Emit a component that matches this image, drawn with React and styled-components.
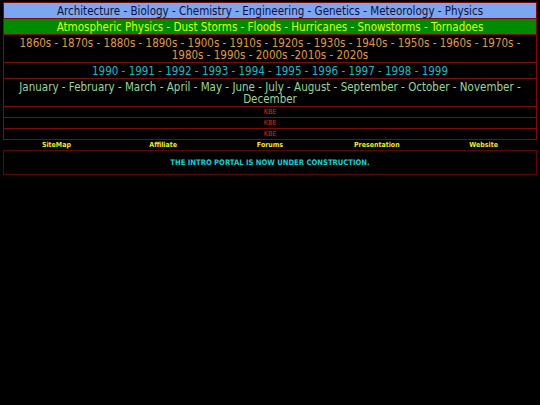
import React from 'react';
import styled, { createGlobalStyle } from 'styled-components';

const GlobalStyle = createGlobalStyle`
  html, body {
    margin: 0;
    padding: 0;
    background: #000;
  }
  body {
    font-family: "DejaVu Sans Condensed", "DejaVu Sans", Verdana, sans-serif;
  }
`;

const Page = styled.div`
  padding: 2px 3px;
  display: flex;
  flex-direction: column;
`;

// one bordered strip of the index
const Band = styled.div`
  border: 1px solid #7a0c0c;
  border-top: ${p => (p.$first ? '1px solid #7a0c0c' : 'none')};
  background: ${p => p.$bg || '#000'};
  color: ${p => p.$color};
  font-size: 11.5px;
  line-height: 12px;
  padding: 2px 2px 1px;
  text-align: center;
`;

const SmallBand = styled.div`
  border: 1px solid #7a0c0c;
  border-top: none;
  color: #ec1c1c;
  font-size: 7px;
  line-height: 10px;
  text-align: center;
`;

const LinkRow = styled.div`
  display: grid;
  grid-template-columns: repeat(5, 1fr);
`;

const LinkItem = styled.a`
  color: #eeee10;
  font-size: 7px;
  font-weight: bold;
  line-height: 10px;
  text-align: center;
  text-decoration: none;
`;

const Notice = styled.div`
  border: 1px solid #5a0808;
  color: #10d0d8;
  font-size: 7.6px;
  font-weight: bold;
  text-align: center;
  padding: 8px 0;
  line-height: 7px;
`;

const subjects = ['Architecture', 'Biology', 'Chemistry', 'Engineering', 'Genetics', 'Meteorology', 'Physics'];
const weather = ['Atmospheric Physics', 'Dust Storms', 'Floods', 'Hurricanes', 'Snowstorms', 'Tornadoes'];
const years = ['1990', '1991', '1992', '1993', '1994', '1995', '1996', '1997', '1998', '1999'];
const months = ['January', 'February', 'March', 'April', 'May', 'June', 'July', 'August', 'September', 'October', 'November', 'December'];
const links = ['SiteMap', 'Affiliate', 'Forums', 'Presentation', 'Website'];

const decades = '1860s - 1870s - 1880s - 1890s - 1900s - 1910s - 1920s - 1930s - 1940s - 1950s - 1960s - 1970s - 1980s - 1990s - 2000s -2010s - 2020s';

export default function App() {
  return (
    <Page>
      <GlobalStyle />
      <Band $first $bg="#7ea6f0" $color="#0a1040">{subjects.join(' - ')}</Band>
      <Band $bg="#008a00" $color="#d8ff10">{weather.join(' - ')}</Band>
      <Band $color="#e09a3a">{decades}</Band>
      <Band $color="#18b8c8">{years.join(' - ')}</Band>
      <Band $color="#9ad49a">{months.join(' - ')}</Band>
      <SmallBand>KBE</SmallBand>
      <SmallBand>KBE</SmallBand>
      <SmallBand>KBE</SmallBand>
      <LinkRow>
        {links.map(l => <LinkItem key={l}>{l}</LinkItem>)}
      </LinkRow>
      <Notice>THE INTRO PORTAL IS NOW UNDER CONSTRUCTION.</Notice>
    </Page>
  );
}
